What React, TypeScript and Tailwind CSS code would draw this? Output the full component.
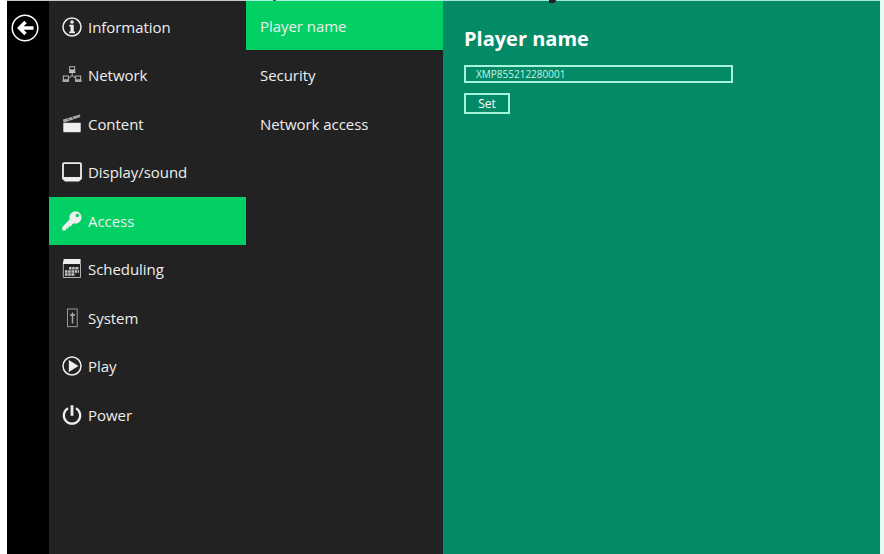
import type { ReactNode } from 'react'

type MenuItem = { label: string; icon: ReactNode }

const MENU: MenuItem[] = [
  {
    label: 'Information',
    icon: (
      <>
        <circle cx="10" cy="10" r="9" fill="none" stroke="currentColor" strokeWidth="1.5" />
        <circle cx="10" cy="5" r="1.8" />
        <path d="M7.3 7.8h4.4v6.7H13v1.8H7.300v-1.800h1.200V9.500H7.300z" />
      </>
    ),
  },
  {
    label: 'Network',
    icon: (
      <g fill="none" stroke="currentColor" strokeWidth="0.9" opacity="0.8">
        <rect x="7.7" y="1.7" width="5" height="4.5" />
        <path d="M7 7.2h6.4M7.6 5.4h5.2" strokeWidth="1.6" />
        <rect x="1.3" y="11" width="5" height="3.8" />
        <path d="M.5 16h6.6" strokeWidth="1.6" />
        <rect x="13.7" y="11" width="5" height="3.8" />
        <path d="M13 16h6.600" strokeWidth="1.6" />
        <path d="M10.2 7.5v3M7.5 13l1.2-2h3l1.2 2" />
      </g>
    ),
  },
  {
    label: 'Content',
    icon: (
      <>
        <path d="M1.3 8.800h17.400v9.400H1.300z" />
        <path d="M1 5.400 17.800.400l.6 2.600L3.300 8.200H1.500z" opacity="0.650" />
        <path d="m5.500 4.300 1.500 2m3-3.300 1.500 2" stroke="#222" strokeWidth="0.700" />
      </>
    ),
  },
  {
    label: 'Display/sound',
    icon: (
      <>
        <rect x="1" y="1.2" width="18" height="15.8" rx="1" fill="none" stroke="currentColor" strokeWidth="1.8" />
        <path d="M1 15h18v2.500l-2 2H3l-2-2z" />
      </>
    ),
  },
  {
    label: 'Access',
    icon: (
      <path
        fillRule="evenodd"
        d="M13.5.2a6.200 6.200 0 0 0-5.800 8L.2 16.300v3.100h3.500l.5-1.800h2l.4-2h2l2.800-3.300A6.200 6.200 0 1 0 13.500.2zM15.300 2.800a1.700 1.700 0 1 1 0 3.400 1.700 1.700 0 0 1 0-3.400z"
      />
    ),
  },
  {
    label: 'Scheduling',
    icon: (
      <>
        <path d="M1.800 0h16.800v5H.7z" />
        <path d="M1.300 5v13.500h17.200V5" fill="none" stroke="currentColor" strokeWidth="1" opacity="0.700" />
        <path
          d="M7 9.200h10M3 12.400h14M3 15.600h10"
          stroke="currentColor"
          strokeWidth="2.500"
          strokeDasharray="2.500 0.700"
          opacity="0.800"
        />
      </>
    ),
  },
  {
    label: 'System',
    icon: (
      <g fill="none" stroke="currentColor" strokeWidth="0.900" opacity="0.650">
        <rect x="5.500" y="1" width="9.700" height="17.700" />
        <path d="M10.500 4.500v11" strokeWidth="1.500" />
        <path d="M8 7h5" strokeWidth="1.700" />
      </g>
    ),
  },
  {
    label: 'Play',
    icon: (
      <>
        <circle cx="10" cy="10" r="9" fill="none" stroke="currentColor" strokeWidth="1.500" />
        <path d="M6.800 4v12L16.500 10z" />
      </>
    ),
  },
  {
    label: 'Power',
    icon: (
      <g fill="none" stroke="currentColor" strokeWidth="2.200">
        <path d="M6 3.300a8.200 8.200 0 1 0 8 0" />
        <path d="M10 .3v10.500" strokeWidth="2.800" />
      </g>
    ),
  },
]

const SUBMENU = ['Player name', 'Security', 'Network access']

function BackButton() {
  return (
    <button className="mt-[13px] ml-[4px] block h-7 w-7 text-white" aria-label="Back">
      <svg viewBox="0 0 28 28" className="h-7 w-7" fill="none" stroke="currentColor">
        <circle cx="14" cy="14" r="12.800" strokeWidth="1.500" />
        <path d="M22.500 14H8M14.500 8 8.500 14l6 6" strokeWidth="3.500" />
      </svg>
    </button>
  )
}

export default function App() {
  return (
    <div className="relative flex h-[554px] w-[884px] overflow-hidden bg-white pl-[7px] font-['Open_Sans','Noto_Sans',sans-serif] text-[#eeeeee]">
      {/* descenders of the heading above the panel */}
      <span className="absolute top-0 left-[273px] z-10 h-px w-[3px] bg-[#222222]/70" />
      <span className="absolute top-0 left-[549px] z-10 h-[3px] w-[7px] rounded-br-[3px] bg-[#222222]" />

      <div className="w-[42px] shrink-0 border-t border-[#c8c8c8] bg-black">
        <BackButton />
      </div>

      <nav className="w-[197px] shrink-0 border-t border-[#c8c8c8] bg-[#222222] pt-[1.5px]">
        {MENU.map((item) => (
          <div
            key={item.label}
            className={`flex h-[48.5px] items-center gap-[6px] pl-[13px] text-[15px] ${
              item.label === 'Access' ? 'bg-[#03d064]' : ''
            }`}
          >
            <svg viewBox="0 0 20 20" className="h-5 w-5" fill="currentColor">
              {item.icon}
            </svg>
            <span className="tracking-[-0.05px]">{item.label}</span>
          </div>
        ))}
      </nav>

      <div className="w-[197px] shrink-0 border-t border-[#a5f5dc] bg-[#222222]">
        {SUBMENU.map((label) => (
          <div
            key={label}
            className={`flex h-[49px] items-center pt-px pl-[14px] text-[15px] tracking-[-0.05px] ${
              label === 'Player name' ? 'bg-[#03d064]' : ''
            }`}
          >
            {label}
          </div>
        ))}
      </div>

      <main className="flex-1 border-t border-[#a5e8d8] bg-[#048a66] pt-[24px] pl-[21px] text-white">
        <h1 className="text-[20px] leading-7 font-bold">Player name</h1>
        <div className="mt-[12px] flex h-[18px] w-[269px] items-center border-2 border-[#a5f5dc] pl-[10px] text-[10px] text-[#c5f5e6]">
          XMP855212280001
        </div>
        <button className="mt-[10px] flex h-[21px] w-[46px] items-center justify-center border-2 border-[#a5f5dc] text-[12px]">
          Set
        </button>
      </main>
      <div className="w-[4px] shrink-0 bg-[#e4fcf5]" />
    </div>
  )
}
